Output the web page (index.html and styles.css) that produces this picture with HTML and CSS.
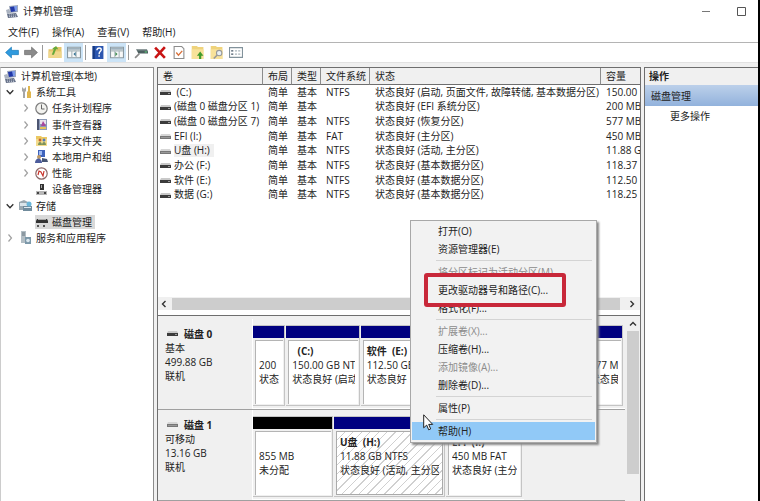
FILE: index.html
```html
<!DOCTYPE html>
<html lang="zh-CN">
<head>
  <meta charset="UTF-8" />
  <meta name="viewport" content="width=device-width, initial-scale=1.0"/>
  <title>计算机管理</title>
  <link rel="stylesheet" href="styles.css">
</head>
<body>
  <svg class="defs" aria-hidden="true">
    <symbol id="i-computer" viewBox="0 0 13 13">
      <path d="M3 1l9-1v7l-8 1z" fill="#9fa9bd"/>
      <path d="M4 2l7-1v5L5 7z" fill="#2238a8"/>
      <path d="M8 1l3 0v5l-2 0z" fill="#7e9be8"/>
      <path d="M0 5l3-1 2 4-4 1z" fill="#aab2c0"/>
      <path d="M1 9l9-1 2 4-10 1z" fill="#68738a"/>
      <path d="M3 10h7M3 11.500h7" stroke="#d5dae5" stroke-width=".7" stroke-dasharray="1 1"/>
    </symbol>
    <symbol id="i-drive" viewBox="0 0 11 6">
      <path d="M1 0h9l1 2H0z" fill="#c9c9c9"/>
      <path d="M0 2h11v3H0z" fill="#3c3c3c"/>
      <path d="M8 3h2v1H8z" fill="#9c9c9c"/>
    </symbol>
    <symbol id="i-drive-light" viewBox="0 0 11 6">
      <path d="M1 0h9l1 2H0z" fill="#d6d6d6"/>
      <path d="M0 2h11v3H0z" fill="#777"/>
      <path d="M1 3h9v1H1z" fill="#999"/>
    </symbol>
    <symbol id="i-right" viewBox="0 0 8 8"><path d="M2.500 0.500L5.500 4l-3 3.500" fill="none" stroke="#a0a0a0" stroke-width="1.200"/></symbol>
    <symbol id="i-down" viewBox="0 0 8 8"><path d="M.7 2.300L4 5.700l3.300-3.400" fill="none" stroke="#303030" stroke-width="1.300"/></symbol>
    <symbol id="i-arrow" viewBox="0 0 13 12"><path d="M0.500 6L6 1v3h6.500v4H6v3z"/></symbol>
    <symbol id="i-folder" viewBox="0 0 12 12"><path d="M0 0h5l1 1h5v11H0z" fill="#efd37c"/><path d="M0 3h11v9H0z" fill="#f8e29a"/></symbol>
    <symbol id="i-panel" viewBox="0 0 13 11">
      <path d="M.5.5h12v10H.5z" fill="#f7f8f8" stroke="#8998a0"/>
      <path d="M1 1h11v2H1z" fill="#9eb1bd"/>
      <path d="M4.500 4v6M8.500 4v6M1 4h11" stroke="#a8b5ba"/>
    </symbol>
  </svg>

  <div class="window">
    <header class="titlebar">
      <svg class="icon"><use href="#i-computer"/></svg>
      <h1>计算机管理</h1>
      <div class="window-btns">
        <button aria-label="最小化"><svg viewBox="0 0 10 10"><path d="M1 5.500h8" stroke="#777"/></svg></button>
        <button aria-label="最大化"><svg viewBox="0 0 10 10"><path d="M.5 1.500h8v8h-8z" fill="none" stroke="#555"/></svg></button>
      </div>
    </header>

    <nav class="menubar">
      <button>文件(F)</button>
      <button>操作(A)</button>
      <button>查看(V)</button>
      <button>帮助(H)</button>
    </nav>

    <div class="toolbar">
      <button aria-label="后退"><svg viewBox="0 0 13 12" fill="#2f9ade" stroke="#1779b8" stroke-width=".6"><use href="#i-arrow"/></svg></button>
      <button aria-label="前进"><svg class="flip" viewBox="0 0 13 12" fill="#8b8b8b" stroke="#6c6c6c" stroke-width=".6"><use href="#i-arrow"/></svg></button>
      <span class="sep"></span>
      <button aria-label="向上"><svg viewBox="0 0 12 12"><path d="M0 3h4l1-2h7v10H0z" fill="#e4c56c"/><path d="M0 5h12v6H0z" fill="#f0d78c"/><path d="M3 8l2-5-2 0 4-3 2 3-2 0-2 5z" fill="#65a93a"/></svg></button>
      <button class="active" aria-label="显示控制台树"><svg viewBox="0 0 13 11"><use href="#i-panel"/><path d="M8 5v4L6 7z" fill="#2c6c8d"/></svg></button>
      <span class="sep"></span>
      <button aria-label="帮助"><svg viewBox="0 0 12 12"><path d="M1 0h10v12H1z" fill="#2b56b0"/><path d="M1 0h2v12H1z" fill="#173a82"/><path d="M5 4c0-3 4-2.500 4-.5C9 5 7 5 7 7.500M7 8.500V10" fill="none" stroke="#fff" stroke-width="1.300"/></svg></button>
      <button class="active" aria-label="显示操作窗格"><svg viewBox="0 0 13 11"><use href="#i-panel"/><path d="M5 5v4l2-2z" fill="#3c8a4d"/></svg></button>
      <span class="sep"></span>
      <button aria-label="连接"><svg viewBox="0 0 13 12"><path d="M2 3h10l1 2v2H4z" fill="#4c5f60"/><path d="M3 3h9v1H3z" fill="#9aa5a5"/><path d="M5 7l-4 4" stroke="#888" stroke-width="1.500"/><path d="M10 5h2v1h-2z" fill="#5fd17a"/></svg></button>
      <button aria-label="删除"><svg viewBox="0 0 12 12"><path d="M1.500 1.500l9 9.500M10.500 1L1.500 11" stroke="#c81414" stroke-width="2.400"/></svg></button>
      <button aria-label="属性"><svg viewBox="0 0 12 12"><path d="M1.500.5h7l2 2v9h-9z" fill="#fff" stroke="#8c8c8c"/><path d="M3.500 6l2 2.500 3.500-4" fill="none" stroke="#d8703a" stroke-width="1.200"/></svg></button>
      <button aria-label="导出"><svg viewBox="0 0 12 12"><use href="#i-folder"/><path d="M7 12V9H5l3-4 3 4H9v3z" fill="#3f9b2c"/></svg></button>
      <button aria-label="查找"><svg viewBox="0 0 12 12"><use href="#i-folder"/><circle cx="8" cy="6.500" r="2.500" fill="#e8f0f4" stroke="#999"/><path d="M6 8.500L3 11.500" stroke="#999" stroke-width="1.500"/></svg></button>
      <button aria-label="列表"><svg viewBox="0 0 13 12"><path d="M.5 1.500h12v9H.5z" fill="#fff" stroke="#82929b"/><path d="M2 4.500h2M2 7.500h2" stroke="#456"/><path d="M5.500 4.500h5M5.500 7.500h5" stroke="#a9b4ba" stroke-dasharray="2 1"/></svg></button>
    </div>

    <main class="panes">
      <ul class="tree">
        <li><svg class="icon"><use href="#i-computer"/></svg><span>计算机管理(本地)</span></li>
        <li class="l1"><svg class="chev"><use href="#i-down"/></svg><svg class="icon" viewBox="0 0 13 13"><path d="M3 1v4l1 1v6h2V6l1-1V1L5 3z" fill="#a6a6a6"/><path d="M9 0h2v5l1 1v6H8V6l1-1z" fill="#e0b64e"/></svg><span>系统工具</span></li>
        <li class="l2"><svg class="chev"><use href="#i-right"/></svg><svg class="icon" viewBox="0 0 13 13"><circle cx="6.500" cy="6.500" r="5.700" fill="#f2f2ef" stroke="#7b7b7b" stroke-width="1.200"/><path d="M6.500 2.500v4.500h3" fill="none" stroke="#666"/></svg><span>任务计划程序</span></li>
        <li class="l2"><svg class="chev"><use href="#i-right"/></svg><svg class="icon" viewBox="0 0 13 13"><path d="M2 1h10v11H2z" fill="#8d9ab8"/><path d="M2 1h2v11H2z" fill="#4c5571"/><path d="M5 2h6v4H5z" fill="#e8e3ec"/><path d="M8 3l3 5H6z" fill="#a8479b"/><path d="M5 9h6v2H5z" fill="#e5c35a"/></svg><span>事件查看器</span></li>
        <li class="l2"><svg class="chev"><use href="#i-right"/></svg><svg class="icon" viewBox="0 0 13 13"><path d="M1 2h5l1 1h5v9H1z" fill="#ebc862"/><path d="M1 5h11v7H1z" fill="#f4dc8d"/><circle cx="5" cy="6" r="1.500" fill="#c4622d"/><circle cx="9" cy="6" r="1.500" fill="#567ab8"/><path d="M3 11c0-4 4-4 4 0zM7 11c0-4 4-4 4 0z" fill="#7d925a"/></svg><span>共享文件夹</span></li>
        <li class="l2"><svg class="chev"><use href="#i-right"/></svg><svg class="icon" viewBox="0 0 13 13"><path d="M3 0h7v7H3z" fill="#3f63bb"/><path d="M4 1h3v4H4z" fill="#9db9f2"/><circle cx="4" cy="7" r="2" fill="#bd9965"/><path d="M0 13c0-6 7-6 7 0z" fill="#4c5c9c"/><path d="M7 8l5 1 1 3H7z" fill="#465574"/></svg><span>本地用户和组</span></li>
        <li class="l2"><svg class="chev"><use href="#i-right"/></svg><svg class="icon" viewBox="0 0 13 13"><circle cx="6.500" cy="6.500" r="5.700" fill="#fff" stroke="#8b6868" stroke-width="1.200"/><path d="M3 8l1-4 2 1 2 4 1-5" fill="none" stroke="#c9352c" stroke-width="1.200"/></svg><span>性能</span></li>
        <li class="l2"><span class="chev"></span><svg class="icon" viewBox="0 0 13 13"><path d="M5 1h4v6H5z" fill="#333"/><path d="M6 2h1v3H6z" fill="#aaa"/><path d="M1 8h11v4H1z" fill="#b8b8b8"/><path d="M2 9h2v2H2zM9 9h2v2H9z" fill="#444"/></svg><span>设备管理器</span></li>
        <li class="l1"><svg class="chev"><use href="#i-down"/></svg><svg class="icon" viewBox="0 0 13 13"><path d="M0 3l5-2 4 2v8H0z" fill="#9ba8b0"/><path d="M1 4h7v3H1z" fill="#dbe5ea"/><path d="M4 7h9v5H4z" fill="#708b9c"/><path d="M5 8h7v1H5z" fill="#dfe9ef"/><circle cx="10" cy="5" r="2.500" fill="#6bb6d8"/></svg><span>存储</span></li>
        <li class="l2"><span class="chev"></span><span class="picked"><svg class="icon" viewBox="0 0 13 13"><path d="M2 4h10l1 2v2H1V6z" fill="#333"/><path d="M3 4h8v1H3z" fill="#aaa"/><path d="M2 10h2v2H2zM8 10h2v2H8z" fill="#555"/></svg><span>磁盘管理</span></span></li>
        <li class="l1"><svg class="chev"><use href="#i-right"/></svg><svg class="icon" viewBox="0 0 13 13"><path d="M2 0h5v12H2z" fill="#b2bdc4"/><path d="M3 2h3M3 4h3" stroke="#67757e"/><path d="M6 6h6v7H6z" fill="#7c98a9"/><circle cx="9" cy="9.500" r="1.800" fill="#dce8ef"/></svg><span>服务和应用程序</span></li>
      </ul>

      <section class="center">
        <div class="volumes">
          <table>
            <colgroup><col class="c-vol"><col class="c-short"><col class="c-short"><col class="c-fs"><col><col class="c-size"></colgroup>
            <thead>
              <tr><th>卷</th><th>布局</th><th>类型</th><th>文件系统</th><th>状态</th><th>容量</th></tr>
            </thead>
            <tbody>
              <tr><td><svg class="drive"><use href="#i-drive"/></svg><span>&nbsp;(C:)</span></td><td>简单</td><td>基本</td><td>NTFS</td><td>状态良好 (启动, 页面文件, 故障转储, 基本数据分区)</td><td>150.00</td></tr>
              <tr><td><svg class="drive"><use href="#i-drive"/></svg><span>(磁盘 0 磁盘分区 1)</span></td><td>简单</td><td>基本</td><td></td><td>状态良好 (EFI 系统分区)</td><td>200 MB</td></tr>
              <tr><td><svg class="drive"><use href="#i-drive"/></svg><span>(磁盘 0 磁盘分区 7)</span></td><td>简单</td><td>基本</td><td>NTFS</td><td>状态良好 (恢复分区)</td><td>577 MB</td></tr>
              <tr><td><svg class="drive"><use href="#i-drive-light"/></svg><span>EFI (I:)</span></td><td>简单</td><td>基本</td><td>FAT</td><td>状态良好 (主分区)</td><td>450 MB</td></tr>
              <tr><td><svg class="drive"><use href="#i-drive-light"/></svg><span class="sel">U盘 (H:)</span></td><td>简单</td><td>基本</td><td>NTFS</td><td>状态良好 (活动, 主分区)</td><td>11.88 G</td></tr>
              <tr><td><svg class="drive"><use href="#i-drive"/></svg><span>办公 (F:)</span></td><td>简单</td><td>基本</td><td>NTFS</td><td>状态良好 (基本数据分区)</td><td>118.37</td></tr>
              <tr><td><svg class="drive"><use href="#i-drive"/></svg><span>软件 (E:)</span></td><td>简单</td><td>基本</td><td>NTFS</td><td>状态良好 (基本数据分区)</td><td>112.50</td></tr>
              <tr><td><svg class="drive"><use href="#i-drive"/></svg><span>数据 (G:)</span></td><td>简单</td><td>基本</td><td>NTFS</td><td>状态良好 (基本数据分区)</td><td>118.25</td></tr>
            </tbody>
          </table>
          <div class="hscroll">
            <svg viewBox="0 0 8 8"><path d="M5.500 1L2.500 4l3 3" fill="none" stroke="#333" stroke-width="1.400"/></svg>
            <div class="thumb"></div>
            <svg viewBox="0 0 8 8"><path d="M2.500 1l3 3-3 3" fill="none" stroke="#333" stroke-width="1.400"/></svg>
          </div>
        </div>

        <div class="disks">
          <div class="disk-list">
            <div class="disk">
              <div class="disk-label">
                <h2><svg class="drive"><use href="#i-drive"/></svg>磁盘 0</h2>
                <p>基本</p><p>499.88 GB</p><p>联机</p>
              </div>
              <div class="parts">
                <div class="part w-tiny"><div class="box"><b>&nbsp;</b><p>200</p><p>状态</p></div></div>
                <div class="part"><div class="box"><b>&nbsp; (C:)</b><p>150.00 GB NTFS</p><p>状态良好 (启动)</p></div></div>
                <div class="part"><div class="box"><b>软件&nbsp; (E:)</b><p>112.50 GB</p><p>状态良好</p></div></div>
                <div class="part"><div class="box"></div></div>
                <div class="part"><div class="box"></div></div>
                <div class="part w-small"><div class="box"><b>&nbsp;</b><p>577 MB</p><p>状态良好</p></div></div>
              </div>
            </div>
            <div class="disk">
              <div class="disk-label">
                <h2><svg class="drive"><use href="#i-drive-light"/></svg>磁盘 1</h2>
                <p>可移动</p><p>13.16 GB</p><p>联机</p>
              </div>
              <div class="parts parts-usb">
                <div class="part free w-free"><div class="box"><b>&nbsp;</b><p>855 MB</p><p>未分配</p></div></div>
                <div class="part w-usb"><div class="box hatch"><b>U盘&nbsp; (H:)</b><p>11.88 GB NTFS</p><p>状态良好 (活动, 主分区)</p></div></div>
                <div class="part w-efi"><div class="box"><b>EFI&nbsp; (I:)</b><p>450 MB FAT</p><p>状态良好 (主分区)</p></div></div>
              </div>
            </div>
          </div>
          <div class="vscroll">
            <svg viewBox="0 0 8 8"><path d="M1 5.500l3-3 3 3" fill="none" stroke="#333" stroke-width="1.400"/></svg>
            <div class="thumb"></div>
          </div>
        </div>
      </section>

      <aside class="actions">
        <h2>操作</h2>
        <h3>磁盘管理</h3>
        <button>更多操作</button>
      </aside>
    </main>

    <ul class="context-menu">
      <li><button>打开(O)</button></li>
      <li><button>资源管理器(E)</button></li>
      <li class="line"></li>
      <li><button disabled>将分区标记为活动分区(M)</button></li>
      <li class="marked"><button>更改驱动器号和路径(C)...</button></li>
      <li><button>格式化(F)...</button></li>
      <li class="line"></li>
      <li><button disabled>扩展卷(X)...</button></li>
      <li><button>压缩卷(H)...</button></li>
      <li><button disabled>添加镜像(A)...</button></li>
      <li><button>删除卷(D)...</button></li>
      <li class="line"></li>
      <li><button>属性(P)</button></li>
      <li class="line"></li>
      <li><button class="hot">帮助(H)</button></li>
    </ul>
    <svg class="cursor" viewBox="0 0 11 17"><path d="M.7.8v13l3-2.700 2 4.700 2-.9-2-4.500h4z" fill="#fff" stroke="#222"/></svg>
  </div>
</body>
</html>
```

FILE: styles.css
```css
* {
  box-sizing: border-box;
}
body {
  margin: 0;
  background: #000;
  color: #222;
  font-family: "Open Sans", "Noto Sans CJK SC", sans-serif;
  font-size: 10px;
  line-height: 14px;
}
h1, h2, h3, p, ul {
  margin: 0;
  padding: 0;
  font-size: 10px;
}
h1 {
  font-weight: normal;
}
ul {
  list-style: none;
}
button {
  font: inherit;
  color: inherit;
  background: none;
  border: none;
  padding: 0;
  text-align: left;
}
svg {
  display: block;
  flex: none;
}
.defs {
  display: none;
}
.icon {
  width: 13px;
  height: 13px;
}
.drive {
  width: 11px;
  height: 6px;
}
.window {
  position: relative;
  display: flex;
  flex-direction: column;
  height: 100vh;
  margin-right: 2px;
  background: #f0f0f0;
  overflow: hidden;
}

/* title, menus, toolbar */
.titlebar {
  display: flex;
  align-items: center;
  gap: 4px;
  height: 22px;
  padding: 0 11px 0 6px;
  background: #fff;
}
.window-btns {
  display: flex;
  gap: 26px;
  margin-left: auto;
}
.window-btns svg {
  width: 10px;
  height: 10px;
}
.menubar {
  display: flex;
  gap: 13px;
  height: 21px;
  padding-left: 8px;
  background: #fff;
  border-bottom: 1px solid #b4b4b4;
}
.toolbar {
  display: flex;
  align-items: center;
  height: 20px;
  padding-left: 2px;
  background: #fff;
  border-bottom: 1px solid #e2e2e2;
}
.toolbar button {
  display: flex;
  align-items: center;
  justify-content: center;
  width: 19px;
  height: 19px;
}
.toolbar svg {
  width: 14px;
  height: 13px;
}
.toolbar .flip {
  transform: scaleX(-1);
}
.toolbar .active {
  background: #cce4f7;
}
.sep {
  width: 1px;
  height: 15px;
  margin: 0 2px;
  background: #999;
}

/* three panes */
.panes {
  display: flex;
  flex: 1;
  gap: 3px;
  min-height: 0;
  padding-top: 4px;
}
.tree {
  display: grid;
  grid-auto-rows: 1fr;
  align-content: start;
  flex: none;
  width: 154px;
  background: #fff;
  border: 1px solid #8c8c8c;
  border-left-color: #ccc;
  border-bottom: none;
  padding-bottom: 255px;
}
.tree li {
  display: flex;
  align-items: center;
  gap: 4px;
  padding-left: 3px;
  white-space: nowrap;
}
.tree .l2 {
  padding-left: 19px;
}
.chev {
  width: 8px;
  height: 8px;
  margin: 0 1px 0 2px;
}
.picked {
  display: flex;
  align-items: center;
  gap: 4px;
  padding-right: 3px;
  background: #d9d9d9;
}
.center {
  display: flex;
  flex-direction: column;
  flex: 1;
  min-width: 0;
  border: 1px solid #6e6e6e;
  border-width: 1px 1px 0;
}
.volumes {
  display: flex;
  flex-direction: column;
  height: 248px;
  flex: none;
  background: #fff;
  border-bottom: 1px solid #6e6e6e;
}
table {
  width: 100%;
  height: 134px;
  table-layout: fixed;
  border-collapse: separate;
  border-spacing: 0;
}
.c-vol { width: 105px; }
.c-short { width: 29px; }
.c-fs { width: 49px; }
.c-size { width: 39px; }
th {
  height: 17px;
  padding: 0 0 0 5px;
  font-weight: normal;
  text-align: left;
  background: #f0f0f0;
  border-right: 1px solid #8c8c8c;
  border-bottom: 1px solid #6e6e6e;
}
th:last-child {
  border-right: none;
}
td {
  padding: 0 0 0 5px;
  line-height: 13px;
  white-space: nowrap;
  overflow: hidden;
}
td:first-child {
  padding-left: 2px;
}
td .drive {
  display: inline-block;
  margin-right: 3px;
  vertical-align: middle;
}
.sel {
  display: inline-block;
  padding-right: 4px;
  background: #f0f0f0;
}
.hscroll {
  display: flex;
  align-items: center;
  gap: 4px;
  height: 13px;
  margin: auto 0 5px;
  padding: 0 4px 0 2px;
  background: #f0f0f0;
}
.hscroll svg, .vscroll svg {
  width: 8px;
  height: 8px;
}
.thumb {
  background: #cdcdcd;
}
.hscroll .thumb {
  flex: 1;
  height: 12px;
  margin-right: 4px;
}

/* disk map */
.disks {
  display: flex;
  flex: 1;
  min-height: 0;
  padding-top: 3px;
}
.disk-list {
  flex: 1;
  min-width: 0;
}
.disk {
  display: flex;
  height: 91px;
  border-bottom: 1px solid #a0a0a0;
}
.disk-label {
  flex: none;
  width: 95px;
  padding: 8px 0 0 7px;
  border-right: 1px solid #fff;
}
.disk-label h2 {
  display: flex;
  align-items: center;
  gap: 6px;
  padding-left: 2px;
}
.parts {
  display: flex;
  flex: 1;
  gap: 1px;
  min-width: 0;
  padding: 6px 2px 2px 0;
  border-bottom: 1px solid #fff;
}
.parts-usb {
  margin-right: 101px;
}
.part {
  display: flex;
  flex-direction: column;
  flex: 74;
  min-width: 0;
  border: 1px solid #c4c4c4;
  border-left: none;
}
.part::before {
  content: "";
  height: 12px;
  background: #000080;
}
.part.free::before {
  background: #000;
}
.w-tiny { flex-grow: 32; }
.w-small { flex-grow: 39; }
.w-free { flex-grow: 79; }
.w-usb { flex-grow: 110; }
.w-efi { flex-grow: 75; }
.box {
  flex: 1;
  min-height: 0;
  margin: 2px 1px 1px 2px;
  padding: 3px 3px 0;
  background: #fff;
  border: 1px solid #b4b4b4;
  border-width: 1px 0 0 1px;
  white-space: nowrap;
}
.box b {
  display: block;
}
.box p {
  overflow: hidden;
}
.hatch {
  background: repeating-linear-gradient(135deg, #fff 0 5px, #d0d0d0 5px 6px);
  border: 1px solid #aaa;
}
.vscroll {
  display: flex;
  flex-direction: column;
  align-items: center;
  flex: none;
  width: 15px;
  padding-top: 1px;
}
.vscroll .thumb {
  width: 12px;
  height: 143px;
  margin-top: 3px;
}

.actions {
  flex: none;
  width: 114px;
  background: #fff;
  border: 1px solid #6e6e6e;
  border-width: 1px 0 0 1px;
}
.actions h2 {
  height: 17px;
  padding: 1px 4px;
  background: #f0f0f0;
}
.actions h3 {
  padding: 4px 6px 3px;
  font-weight: normal;
  background: linear-gradient(#bcd0ea, #92b2dc);
}
.actions button {
  display: block;
  padding: 3px 25px;
}

/* right-click menu over the disk map */
.context-menu {
  position: absolute;
  left: 410px;
  top: 220px;
  width: 187px;
  padding: 1px 1px 2px;
  background: #f2f2f2;
  border: 1px solid #a8a8a8;
  box-shadow: 2px 2px 2px #888;
}
.context-menu button {
  display: block;
  width: 100%;
  height: 18px;
  padding-left: 26px;
}
.context-menu button:disabled {
  color: #8c8c8c;
}
.context-menu .hot {
  background: #91c9f7;
}
.context-menu .line {
  height: 5px;
  padding: 2px 3px 0 24px;
}
.line::before {
  content: "";
  display: block;
  height: 1px;
  background: #d4d4d4;
}
.marked {
  position: relative;
  z-index: 1;
}
.marked::before {
  content: "";
  position: absolute;
  z-index: -1;
  inset: -8px 29px -8px 12px;
  background: #f2f2f2;
  border: 4px solid #c8283a;
  border-radius: 3px;
}
.cursor {
  position: absolute;
  left: 423px;
  top: 414px;
  width: 11px;
  height: 17px;
}
```
